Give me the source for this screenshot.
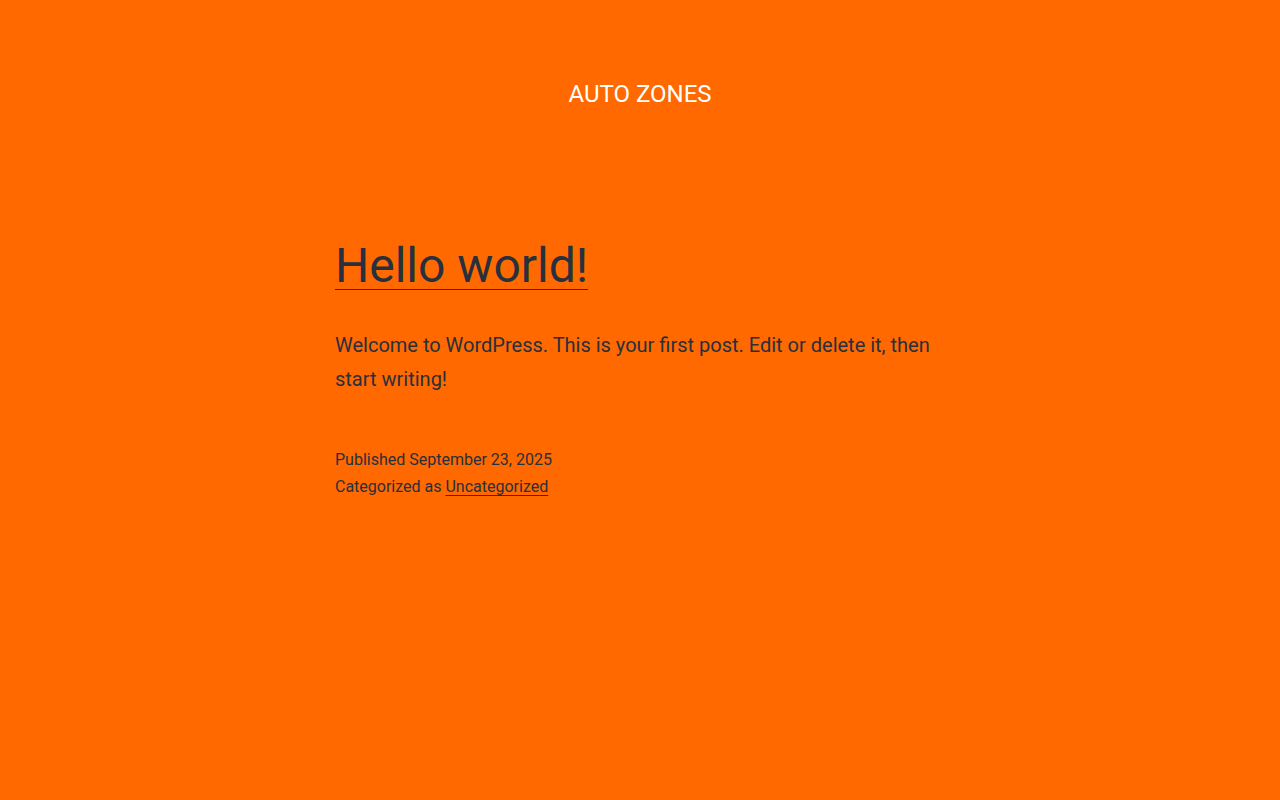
export default function App() {
  return (
    <div className="min-h-screen bg-[#ff6900] text-[#28303d] font-['Roboto',sans-serif]">
      <header className="pt-[78px] text-center">
        <p className="text-[24px] leading-[32px] text-white uppercase">Auto Zones</p>
      </header>

      <main className="mx-auto w-[610px] pt-[127px]">
        <h1 className="text-[48px] leading-[58px] font-normal">
          <a href="#" className="underline decoration-1 underline-offset-[7px]">
            Hello world!
          </a>
        </h1>

        <div className="mt-[33px] text-[20px] leading-[34px]">
          <p>Welcome to WordPress. This is your first post. Edit or delete it, then start writing!</p>
        </div>

        <footer className="mt-[50px] text-[16px] leading-[27px]">
          <p>Published September 23, 2025</p>
          <p>
            Categorized as{' '}
            <a href="#" className="underline decoration-1 underline-offset-[3px]">
              Uncategorized
            </a>
          </p>
        </footer>
      </main>
    </div>
  );
}
